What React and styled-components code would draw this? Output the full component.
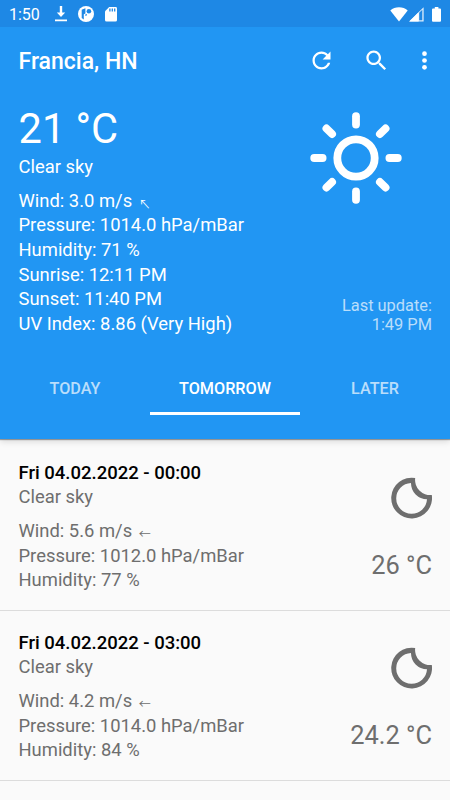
import React from "react";
import styled, { createGlobalStyle } from "styled-components";

const current = [
  "Pressure: 1014.0 hPa/mBar",
  "Humidity: 71 %",
  "Sunrise: 12:11 PM",
  "Sunset: 11:40 PM",
  "UV Index: 8.86 (Very High)",
];

const tabs = ["TODAY", "TOMORROW", "LATER"];

const forecast = [
  {
    date: "Fri 04.02.2022 - 00:00",
    sky: "Clear sky",
    wind: "Wind: 5.6 m/s",
    pressure: "Pressure: 1012.0 hPa/mBar",
    humidity: "Humidity: 77 %",
    temp: "26 °C",
  },
  {
    date: "Fri 04.02.2022 - 03:00",
    sky: "Clear sky",
    wind: "Wind: 4.2 m/s",
    pressure: "Pressure: 1014.0 hPa/mBar",
    humidity: "Humidity: 84 %",
    temp: "24.2 °C",
  },
];

const Sun = () => (
  <svg width="94" height="94" viewBox="-47 -47 94 94">
    <circle r="18.7" fill="none" stroke="#fff" strokeWidth="7.8" />
    {[0, 45, 90, 135, 180, 225, 270, 315].map((deg) => (
      <path
        key={deg}
        d={deg % 90 ? "M0 -33.8V-41.8" : "M0 -33.4V-41.8"}
        transform={`rotate(${deg})`}
        stroke="#fff"
        strokeWidth="7.8"
        strokeLinecap="round"
      />
    ))}
  </svg>
);

const Moon = () => (
  <svg width="42" height="42" viewBox="0 0 42 42">
    <path
      d="M25.2 1A20.4 20.4 0 1 0 41.8 18A15.1 15.1 0 0 1 25.2 1ZM21 6A15.4 15.4 0 1 0 37 22.2A16 16 0 0 1 21 6Z"
      fill="#6e6e6e"
      fillRule="evenodd"
    />
  </svg>
);

const App = () => {
  return (
    <>
      <GlobalStyle />
      <Screen>
        <Header>
          <StatusBar>
            <Clock>1:50</Clock>
            <svg width="12" height="16" viewBox="0 0 12 16" fill="#fff">
              <path d="M4.8 0h2.4v6.5h3L6 11 1.8 6.5h3zM0 13.6h12v1.7H0z" />
            </svg>
            <svg width="16" height="16" viewBox="0 0 16 16">
              <circle cx="8" cy="8" r="8" fill="#fff" />
              <path
                d="M3.7 3.8 7.4 2.2V7.6L5.8 8.2V13.4L3.7 12.1z"
                fill="#1e88e5"
              />
              <circle cx="10.9" cy="5.2" r="2.3" fill="#1e88e5" />
              <path d="M7.4 8.2H9V9.2L7.4 10z" fill="#1e88e5" />
            </svg>
            <svg width="12" height="15" viewBox="0 0 12 15">
              <path
                d="M4.2 0H10.6A1.4 1.4 0 0 1 12 1.4V13a1.5 1.5 0 0 1-1.5 1.5h-9A1.5 1.5 0 0 1 0 13V4.3z"
                fill="#fff"
              />
              <path
                d="M4.9 1.4V4.5M7.3 1.4V4.5M9.7 1.4V4.5"
                stroke="#1e88e5"
                strokeWidth="1.3"
              />
            </svg>
            <Signals>
              <svg width="18" height="15" viewBox="0 0 18 15" fill="#fff">
                <path d="M9 14.4.3 3.5C2.7 1.4 5.7.3 9 .3s6.3 1.1 8.7 3.2z" />
              </svg>
              <svg width="15" height="15" viewBox="0 0 15 15">
                <path d="M14.6.2v14.4H.2z" fill="#fff" fillOpacity=".85" />
                <path d="M9.6 5.2V14.6H.2z" fill="#fff" />
                <path d="M10.2 5.8 13.3 2.7V13.3H10.2z" fill="#1e88e5" />
              </svg>
              <Battery width="9" height="15" viewBox="0 0 9 15" fill="#fff">
                <path d="M2.8 0h3.6v1.5H8a1 1 0 0 1 1 1v11.2a1 1 0 0 1-1 1H1a1 1 0 0 1-1-1V2.5a1 1 0 0 1 1-1h1.8z" />
              </Battery>
            </Signals>
          </StatusBar>
          <Toolbar>
            <Title>Francia, HN</Title>
            <Actions>
              <svg width="27" height="27" viewBox="0 0 24 24" fill="#fff">
                <path d="M17.65 6.35C16.2 4.9 14.21 4 12 4c-4.42 0-7.99 3.58-7.99 8s3.57 8 7.99 8c3.73 0 6.84-2.55 7.73-6h-2.08c-.82 2.33-3.04 4-5.65 4-3.31 0-6-2.69-6-6s2.69-6 6-6c1.66 0 3.14.69 4.22 1.78L13 11h7V4l-2.35 2.35z" />
              </svg>
              <svg width="27" height="27" viewBox="0 0 24 24" fill="#fff">
                <path d="M15.5 14h-.79l-.28-.27C15.41 12.59 16 11.11 16 9.5 16 5.91 13.09 3 9.5 3S3 5.91 3 9.5 5.91 16 9.5 16c1.61 0 3.09-.59 4.23-1.57l.27.28v.79l5 4.99L20.49 19l-4.99-5zm-6 0C7.01 14 5 11.99 5 9.5S7.01 5 9.5 5 14 7.01 14 9.5 11.99 14 9.5 14z" />
              </svg>
              <svg width="27" height="27" viewBox="0 0 24 24" fill="#fff">
                <circle cx="12" cy="5.9" r="2.1" />
                <circle cx="12" cy="12" r="2.1" />
                <circle cx="12" cy="18.1" r="2.1" />
              </svg>
            </Actions>
          </Toolbar>
          <Current>
            <div>
              <Temperature>21 °C</Temperature>
              <Line $gap>Clear sky</Line>
              <Line>
                Wind: 3.0 m/s <Arrow>↖</Arrow>
              </Line>
              {current.map((text) => (
                <Line key={text}>{text}</Line>
              ))}
            </div>
            <Aside>
              <SunBox>
                <Sun />
              </SunBox>
              <LastUpdate>
                Last update:
                <br />
                1:49 PM
              </LastUpdate>
            </Aside>
          </Current>
          <Tabs>
            {tabs.map((tab) => (
              <Tab key={tab} $active={tab === "TOMORROW"}>
                {tab}
              </Tab>
            ))}
          </Tabs>
        </Header>
        <List>
          {forecast.map((item) => (
            <Row key={item.date}>
              <div>
                <DateLine>{item.date}</DateLine>
                <Line $gap>{item.sky}</Line>
                <Line>
                  {item.wind} <Arrow>←</Arrow>
                </Line>
                <Line>{item.pressure}</Line>
                <Line>{item.humidity}</Line>
              </div>
              <Outlook>
                <Moon />
                <RowTemp>{item.temp}</RowTemp>
              </Outlook>
            </Row>
          ))}
        </List>
      </Screen>
    </>
  );
};

export default App;

const GlobalStyle = createGlobalStyle`
  * {
    box-sizing: border-box;
  }
  body {
    margin: 0;
    background: #fafafa;
    font-family: Roboto, sans-serif;
  }
  svg {
    display: block;
    flex-shrink: 0;
  }
`;

const Screen = styled.div`
  width: 450px;
  height: 800px;
  overflow: hidden;
  background: #fafafa;
`;

const Header = styled.header`
  position: relative;
  height: 439px;
  background: #2196f3;
  color: #fff;
  box-shadow: 0 1px 1px rgba(0, 0, 0, 0.35), 0 3px 6px rgba(0, 0, 0, 0.12);
`;

const StatusBar = styled.div`
  display: flex;
  align-items: center;
  height: 27px;
  padding: 1px 9px 0;
  background: #1e88e5;
  svg + svg {
    margin-left: 11px;
  }
`;

const Clock = styled.span`
  width: 46px;
  font-size: 16px;
  line-height: 27px;
`;

const Signals = styled.div`
  display: flex;
  margin-left: auto;
  svg + svg {
    margin-left: 1px;
  }
`;

const Battery = styled.svg`
  && {
    margin-left: 8px;
  }
`;

const Toolbar = styled.div`
  display: flex;
  align-items: center;
  justify-content: space-between;
  height: 66px;
  padding: 0 12px 0 18.5px;
`;

const Title = styled.h1`
  margin: 2px 0 0;
  font-size: 23px;
  font-weight: 500;
`;

const Actions = styled.div`
  display: flex;
  align-items: center;
  svg + svg {
    margin-left: 28px;
  }
  svg + svg + svg {
    margin-left: 21px;
  }
`;

const Current = styled.section`
  display: flex;
  justify-content: space-between;
  height: 268px;
  padding: 9px 18px 0 18.5px;
`;

const Temperature = styled.div`
  padding-top: 1px;
  font-size: 41.6px;
  line-height: 52px;
  height: 53px;
`;

const Line = styled.div`
  height: 24.6px;
  margin-bottom: ${(p) => (p.$gap ? "9.2px" : "0")};
  font-size: 18.4px;
  line-height: 24.6px;
  white-space: nowrap;
`;

const Arrow = styled.span`
  display: inline-block;
  margin-left: 2px;
  font-family: "Noto Sans CJK JP", sans-serif;
  font-size: 12px;
  line-height: 1;
  transform: translateY(1.5px);
`;

const Aside = styled.div`
  display: flex;
  flex-direction: column;
  align-items: flex-end;
`;

const SunBox = styled.div`
  margin: 9px 29px 0 0;
`;

const LastUpdate = styled.div`
  margin-top: 91px;
  font-size: 16.4px;
  line-height: 19.2px;
  text-align: right;
  color: rgba(255, 255, 255, 0.7);
`;

const Tabs = styled.nav`
  display: flex;
`;

const Tab = styled.div`
  flex: 1;
  height: 54px;
  border-bottom: 3px solid ${(p) => (p.$active ? "#fff" : "transparent")};
  font-size: 16.2px;
  font-weight: 500;
  line-height: 55px;
  text-align: center;
  color: ${(p) => (p.$active ? "#fff" : "rgba(255, 255, 255, 0.7)")};
`;

const List = styled.main`
  padding-top: 2px;
`;

const Row = styled.article`
  display: flex;
  justify-content: space-between;
  height: 170px;
  padding: 19.6px 18px 0 18.5px;
  border-bottom: 1px solid #dcdcdc;
  color: #6e6e6e;
`;

const DateLine = styled.div`
  height: 24.6px;
  font-size: 18.5px;
  font-weight: 500;
  line-height: 24.6px;
  color: #000;
`;

const Outlook = styled.div`
  display: flex;
  flex-direction: column;
  align-items: flex-end;
  padding-top: 16.4px;
`;

const RowTemp = styled.div`
  margin-top: 29px;
  font-size: 25.4px;
  line-height: 34px;
`;
